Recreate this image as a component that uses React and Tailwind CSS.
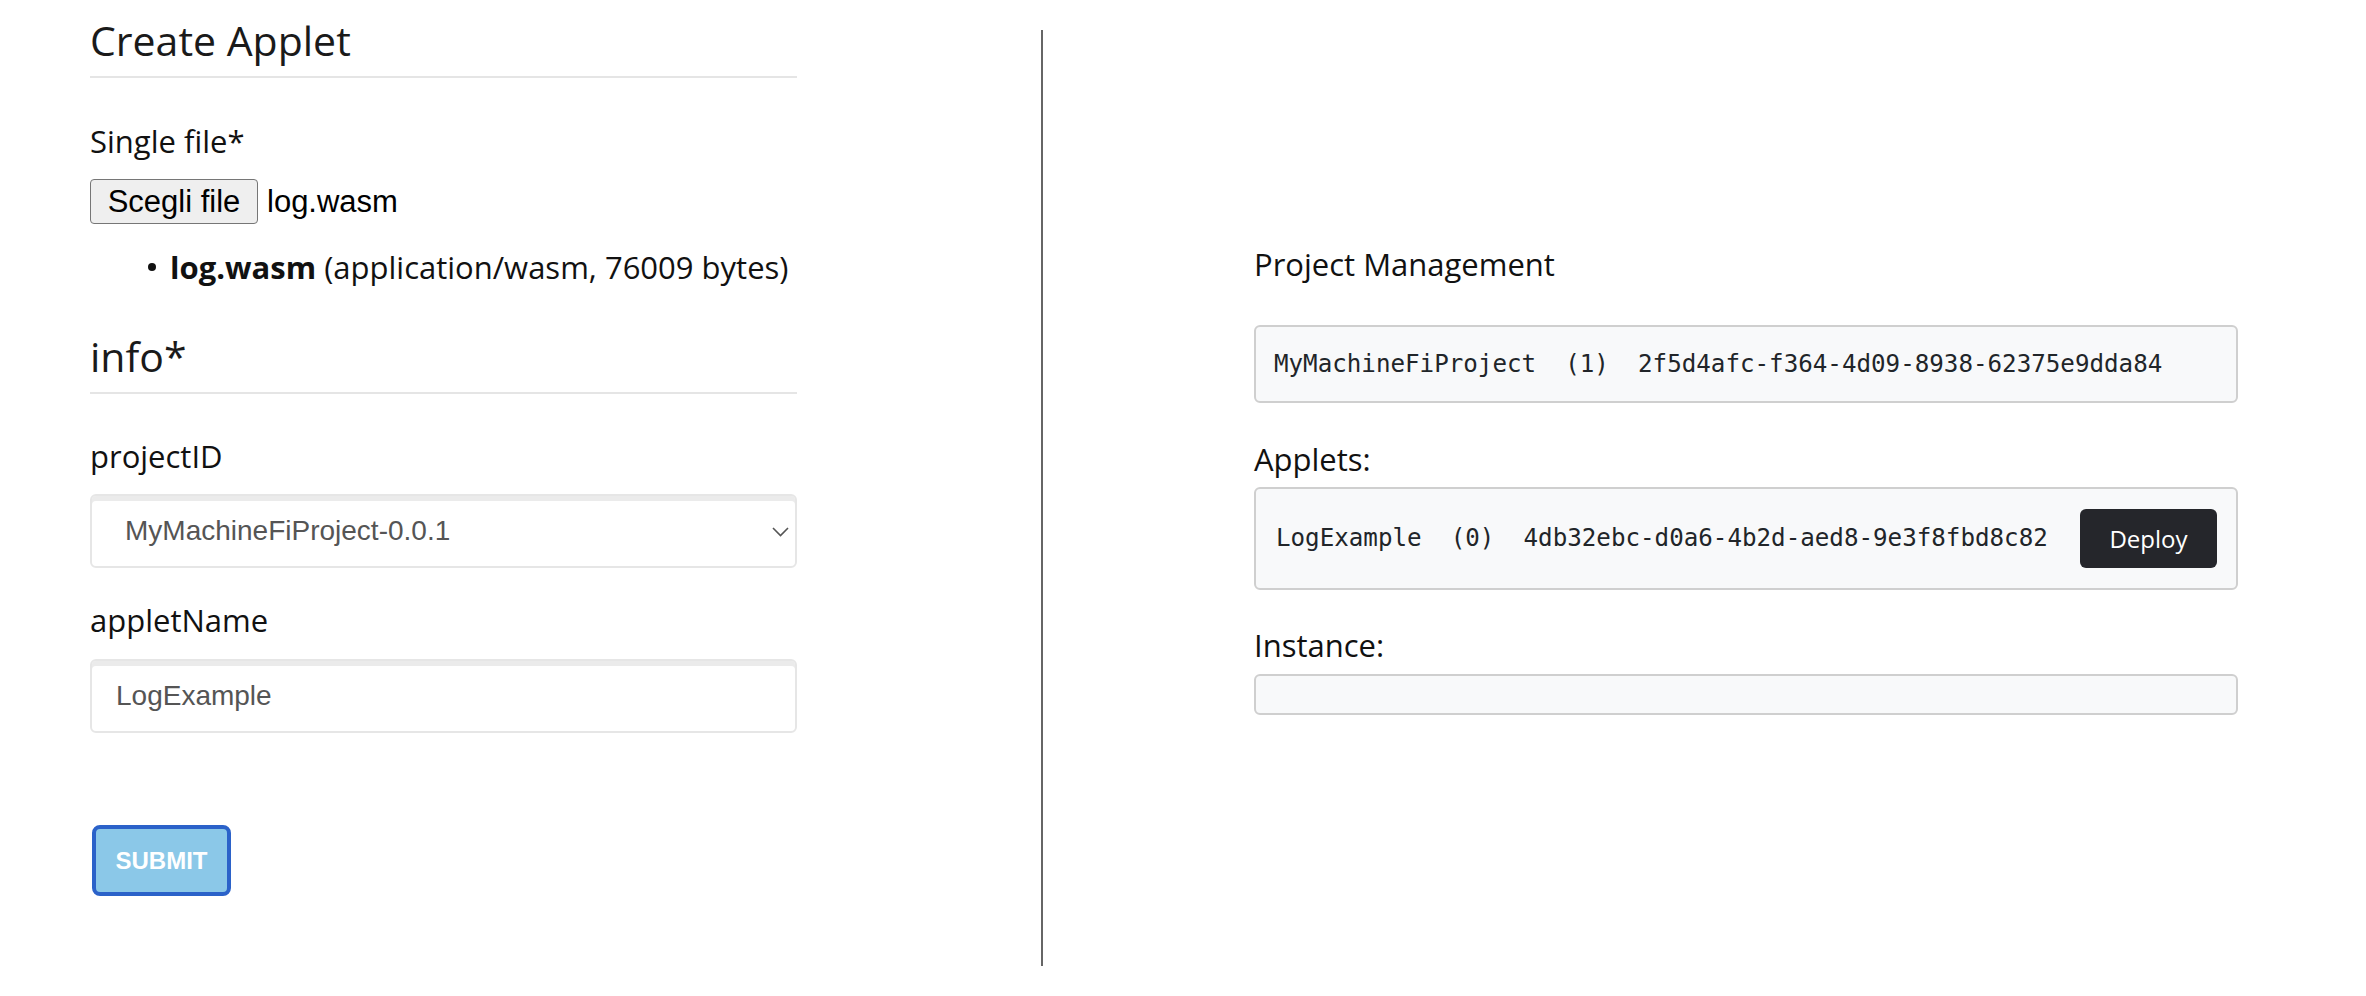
const sans = "font-['Open_Sans',sans-serif]";
const arial = "font-['Liberation_Sans',Arial,sans-serif]";
const mono = "font-['DejaVu_Sans_Mono',monospace]";

function Label({ children, className = "" }) {
  return <div className={`text-[31px] leading-[40px] text-[#111] ${className}`}>{children}</div>;
}

function MonoBox({ children, className = "" }) {
  return (
    <div
      className={`flex items-center rounded-[6px] border-2 border-[#cfcfcf] bg-[#f8f9fa] pl-[18px] pr-[19px] ${mono} text-[24.2px] text-[#212529] whitespace-pre ${className}`}
    >
      {children}
    </div>
  );
}

export default function App() {
  return (
    <div className={`flex min-h-[996px] w-[2366px] bg-white ${sans}`}>
      {/* left: create applet form */}
      <div className="w-[1041px] shrink-0 pl-[90px]">
        <div className="w-[707px]">
          <h3 className="mt-[16px] text-[41px] leading-[48px] text-[#1a1a1a]">Create Applet</h3>
          <hr className="mt-[12px] border-0 border-t-2 border-[#e5e5e5]" />

          <Label className="mt-[43px]">Single file*</Label>
          <div className={`mt-[18px] flex h-[45px] items-center ${arial} text-[31px] leading-none text-black`}>
            <button className="flex h-[45px] w-[168px] items-center justify-center rounded-[4px] border-[1.5px] border-[#767676] bg-[#efefef]">
              Scegli file
            </button>
            <span className="ml-[9px]">log.wasm</span>
          </div>
          <div className="mt-[23px] flex h-[40px] items-center pl-[58px] text-[31px] leading-[40px] text-[#111]">
            <span className="mr-[14px] h-[8px] w-[8px] rounded-full bg-[#111]" />
            <span>
              <span className="font-bold">log.wasm</span> (application/wasm, 76009 bytes)
            </span>
          </div>

          <h3 className="mt-[45px] text-[41px] leading-[48px] text-[#1a1a1a]">info*</h3>
          <hr className="mt-[12px] border-0 border-t-2 border-[#e5e5e5]" />

          <Label className="mt-[42px]">projectID</Label>
          <div className="mt-[18px] flex h-[74px] items-center rounded-[6px] border-2 border-[#e6e6e6] shadow-[inset_0_5px_0_#ebebeb] pl-[33px] pr-[6px]">
            <span className={`${arial} text-[28px] text-[#555]`}>MyMachineFiProject-0.0.1</span>
            <svg className="ml-auto mt-[2px]" width="17" height="10" viewBox="0 0 17 10" fill="none">
              <polyline points="1,1 8.5,8.5 16,1" stroke="#555" strokeWidth="1.6" />
            </svg>
          </div>

          <Label className="mt-[32px]">appletName</Label>
          <div className="mt-[19px] flex h-[74px] items-center rounded-[6px] border-2 border-[#e6e6e6] shadow-[inset_0_5px_0_#ebebeb] pl-[24px]">
            <span className={`${arial} text-[28px] text-[#555]`}>LogExample</span>
          </div>

          <button
            className={`ml-[2px] mt-[92px] flex h-[71px] w-[139px] items-center justify-center rounded-[8px] border-4 border-[#2b62c9] bg-[#8bc8e8] ${arial} text-[24px] font-bold text-white`}
          >
            SUBMIT
          </button>
        </div>
      </div>

      {/* divider */}
      <div className="my-[30px] w-[2px] shrink-0 bg-[#666]" />

      {/* right: project management */}
      <div className="pl-[211px] pt-[244px]">
        <div className="w-[984px]">
          <Label>Project Management</Label>
          <MonoBox className="mt-[41px] h-[78px]">
            {"MyMachineFiProject  (1)  2f5d4afc-f364-4d09-8938-62375e9dda84"}
          </MonoBox>

          <Label className="mt-[36px]">Applets:</Label>
          <MonoBox className="mt-[8px] h-[103px] pl-[20px] pr-[19px]">
            <span>{"LogExample  (0)  4db32ebc-d0a6-4b2d-aed8-9e3f8fbd8c82"}</span>
            <button className={`ml-auto flex h-[59px] w-[137px] items-center justify-center rounded-[6px] bg-[#25262b] ${sans} text-[24px] text-white`}>
              Deploy
            </button>
          </MonoBox>

          <Label className="mt-[35px]">Instance:</Label>
          <MonoBox className="mt-[9px] h-[41px]" />
        </div>
      </div>
    </div>
  );
}
